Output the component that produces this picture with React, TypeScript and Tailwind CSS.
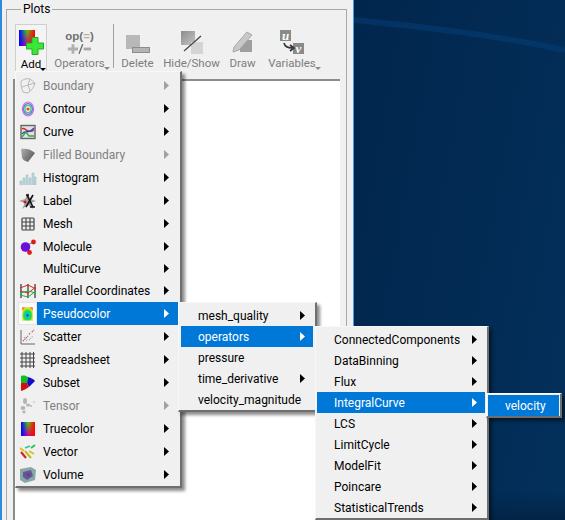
import type { ReactNode } from 'react';

const FONT = "font-['Roboto','Noto_Sans',sans-serif]";

type MenuRow = {
  label: string;
  icon?: ReactNode;
  disabled?: boolean;
  active?: boolean;
  noArrow?: boolean;
  height?: string;
};

const Icon = ({ children }: { children: ReactNode }) => (
  <svg width="18" height="18" viewBox="0 0 18 18" className="block">
    {children}
  </svg>
);

const BoundaryIcon = () => (
  <Icon>
    <path d="M2 4 C5 2 9 1 11 2 L16 6 C15 10 13 13 9 16 L4 15 C2 11 2 7 2 4 Z M11 2 L9 8 L16 6 M9 8 L3 10 M9 8 L11 14" fill="none" stroke="#b8b8b8" strokeWidth="1" />
  </Icon>
);
const ContourIcon = () => (
  <Icon>
    <ellipse cx="9" cy="9" rx="5.6" ry="7" fill="none" stroke="#d070e8" strokeWidth="1.2" />
    <ellipse cx="9" cy="9" rx="4.4" ry="5.4" fill="none" stroke="#4a6ee8" strokeWidth="1.2" />
    <ellipse cx="9" cy="9" rx="3" ry="3.6" fill="none" stroke="#46c860" strokeWidth="1.2" />
    <circle cx="9" cy="9" r="1.6" fill="#d84848" />
  </Icon>
);
const CurveIcon = () => (
  <Icon>
    <rect x="2" y="2.5" width="14" height="13" fill="#e0e0e4" stroke="#666" strokeWidth="1.4" />
    <path d="M3 6 C6 3 8 12 15 7" fill="none" stroke="#d82828" strokeWidth="1.3" />
    <path d="M3 11 C6 6 9 12 15 5" fill="none" stroke="#2848c8" strokeWidth="1.3" />
    <path d="M3 14 L7 9 L10 13 L15 13" fill="none" stroke="#28b040" strokeWidth="1.3" />
  </Icon>
);
const FilledIcon = () => (
  <Icon>
    <defs>
      <linearGradient id="fb" x1="0" y1="0" x2="1" y2="0.6">
        <stop offset="0%" stopColor="#b0b0b0" />
        <stop offset="100%" stopColor="#5c5c5c" />
      </linearGradient>
    </defs>
    <path d="M2 3 C7 2 12 3 16 7 L9 16 C5 15 3 13 3 11 Z" fill="url(#fb)" />
  </Icon>
);
const HistogramIcon = () => (
  <Icon>
    <path d="M1 16 V12 H3 V16 M4 16 V9 H6 V16 M7 16 V6 H9 V16 M10 16 V9 H12 V16 M13 16 V4 H15 V16 M15.5 16 V8 H17 V16" fill="#bcd8dc" stroke="#a0c0c4" strokeWidth="0.6" />
  </Icon>
);
const LabelIcon = () => (
  <Icon>
    <path d="M0 9 L6 7 L9 1 L11 7 L17 9 L12 11 L14 17 L9 13 L3 17 L6 11 Z" fill="#a0a0a0" />
    <path d="M8 3 L14 15 M14 3 L7 15 M7 3 H10 M11 15 H16" stroke="#111" strokeWidth="1.6" fill="none" />
    <circle cx="6" cy="10" r="1.5" fill="#d81818" />
  </Icon>
);
const MeshIcon = () => (
  <Icon>
    <rect x="3" y="3" width="12" height="12" rx="1" fill="#ebebeb" stroke="#444" strokeWidth="1.2" />
    <path d="M3 7 H15 M3 11 H15 M7 3 V15 M11 3 V15" stroke="#444" strokeWidth="1.1" />
  </Icon>
);
const MoleculeIcon = () => (
  <Icon>
    <path d="M7 8 L14 4 M7 9 L11 15" stroke="#777" strokeWidth="1" />
    <circle cx="6.5" cy="9" r="4.8" fill="#6a10d8" />
    <circle cx="14.5" cy="4" r="2.4" fill="#e01818" />
    <circle cx="10.5" cy="14.5" r="2.4" fill="#e01818" />
  </Icon>
);
const ParallelIcon = () => (
  <Icon>
    <path d="M2 2 V16 M9 2 V16 M16 2 V16" stroke="#222" strokeWidth="1.1" />
    <path d="M1 6 L9 3 L17 7 M1 9 L9 11 L17 5" fill="none" stroke="#e02020" strokeWidth="1" />
    <path d="M1 11 L9 9 L17 11 M1 13 L9 15 L17 9" fill="none" stroke="#20b040" strokeWidth="1" />
  </Icon>
);
const PseudocolorIcon = () => (
  <Icon>
    <defs>
      <radialGradient id="pc" cx="50%" cy="60%" r="70%">
        <stop offset="0%" stopColor="#0018e0" />
        <stop offset="22%" stopColor="#00c8e0" />
        <stop offset="50%" stopColor="#20e030" />
        <stop offset="80%" stopColor="#e8e820" />
        <stop offset="100%" stopColor="#f04020" />
      </radialGradient>
    </defs>
    <rect x="3.5" y="2" width="11" height="14" fill="url(#pc)" />
  </Icon>
);
const ScatterIcon = () => (
  <Icon>
    <path d="M2 2 V16 H16" fill="none" stroke="#666" strokeWidth="1" />
    <path d="M4 13 L6 11 M7 10 L9 8 M10 6 L12 5 M13 4 L15 2" stroke="#c04848" strokeWidth="1.5" strokeDasharray="1 1" />
    <path d="M5 9 L8 13 M10 12 L14 8" stroke="#a8a8a8" strokeWidth="1.2" strokeDasharray="1 1" />
  </Icon>
);
const SpreadsheetIcon = () => (
  <Icon>
    <path d="M1 3 H16 M1 7 H16 M1 11 H16 M1 15 H16 M3 1 V17 M7 1 V17 M11 1 V17 M14.5 1 V17" stroke="#444" strokeWidth="1" />
  </Icon>
);
const SubsetIcon = () => (
  <Icon>
    <path d="M2 2 C5 1 7 2 9 3 L8 9 L2 9 Z" fill="#10c020" />
    <path d="M9 3 C12 4 15 5 16 7 L10 13 L8 9 Z" fill="#1010c8" />
    <path d="M2 9 L8 9 L10 13 C7 15 5 16 2 17 Z" fill="#d01010" />
  </Icon>
);
const TensorIcon = () => (
  <Icon>
    <g fill="#b4b4b4">
      <ellipse cx="6" cy="4" rx="2" ry="3" />
      <ellipse cx="4" cy="11" rx="2.4" ry="2" />
      <ellipse cx="9" cy="8" rx="2" ry="1.6" />
      <ellipse cx="5" cy="15" rx="1.6" ry="1.4" />
      <circle cx="12" cy="9" r="1" />
      <circle cx="15" cy="5" r="0.8" />
    </g>
  </Icon>
);
const TruecolorIcon = () => (
  <div className="h-[14px] w-[14px] bg-[linear-gradient(90deg,#0000ff,rgba(0,0,255,0)_55%),linear-gradient(270deg,#ff0000,rgba(255,0,0,0)_60%),linear-gradient(0deg,#d000a0,#40f000)]" />
);
const VectorIcon = () => (
  <Icon>
    <path d="M1 5 L5 8" stroke="#e0c020" strokeWidth="1.8" />
    <path d="M6 5 L11 3" stroke="#30c8a0" strokeWidth="1.8" />
    <path d="M12 5 L16 2" stroke="#30c050" strokeWidth="1.8" />
    <path d="M2 9 L7 15" stroke="#d02018" strokeWidth="2" />
    <path d="M6 8 L12 15" stroke="#c8b820" strokeWidth="2" />
    <path d="M10 8 L15 11" stroke="#d0c020" strokeWidth="1.6" />
  </Icon>
);
const VolumeIcon = () => (
  <Icon>
    <path d="M1 3 L12 1 L17 4 L16 14 L6 17 L1 14 Z" fill="#88a8a8" />
    <path d="M4 6 L12 4 L14 10 L8 14 L4 11 Z" fill="#5e5a98" />
    <path d="M7 8 L11 7 L10 11 Z" fill="#8a2a8a" />
  </Icon>
);

const plotRows: MenuRow[] = [
  { label: 'Boundary', icon: <BoundaryIcon />, disabled: true },
  { label: 'Contour', icon: <ContourIcon /> },
  { label: 'Curve', icon: <CurveIcon /> },
  { label: 'Filled Boundary', icon: <FilledIcon />, disabled: true },
  { label: 'Histogram', icon: <HistogramIcon /> },
  { label: 'Label', icon: <LabelIcon /> },
  { label: 'Mesh', icon: <MeshIcon /> },
  { label: 'Molecule', icon: <MoleculeIcon /> },
  { label: 'MultiCurve', height: 'h-[21px]' },
  { label: 'Parallel Coordinates', icon: <ParallelIcon /> },
  { label: 'Pseudocolor', icon: <PseudocolorIcon />, active: true },
  { label: 'Scatter', icon: <ScatterIcon /> },
  { label: 'Spreadsheet', icon: <SpreadsheetIcon /> },
  { label: 'Subset', icon: <SubsetIcon /> },
  { label: 'Tensor', icon: <TensorIcon />, disabled: true },
  { label: 'Truecolor', icon: <TruecolorIcon /> },
  { label: 'Vector', icon: <VectorIcon /> },
  { label: 'Volume', icon: <VolumeIcon /> },
];

const varRows: MenuRow[] = [
  { label: 'mesh_quality' },
  { label: 'operators', active: true },
  { label: 'pressure', noArrow: true },
  { label: 'time_derivative' },
  { label: 'velocity_magnitude', noArrow: true },
];

const operatorRows: MenuRow[] = [
  { label: 'ConnectedComponents' },
  { label: 'DataBinning' },
  { label: 'Flux' },
  { label: 'IntegralCurve', active: true },
  { label: 'LCS' },
  { label: 'LimitCycle' },
  { label: 'ModelFit' },
  { label: 'Poincare' },
  { label: 'StatisticalTrends' },
];

const Chevron = ({ color }: { color: string }) => (
  <svg width="5" height="9" viewBox="0 0 5 9" className="block">
    <path d="M0 0 L5 4.5 L0 9 Z" fill={color} />
  </svg>
);

const PlotRow = ({ row }: { row: MenuRow }) => {
  const textColor = row.disabled ? 'text-[#808080]' : row.active ? 'text-white' : 'text-black';
  return (
    <div className={`flex items-center ${row.height ?? 'h-[23px]'}`}>
      <div
        className={`flex h-full w-[19px] shrink-0 items-center justify-center ${row.active ? 'border border-[#e3e3e3] bg-[#fafafa]' : ''}`}
      >
        {row.icon}
      </div>
      <div className={`flex h-full flex-1 items-center pl-[6px] pr-[9px] ${textColor} ${row.active ? 'bg-[#0078d7]' : ''}`}>
        <span className="flex-1 whitespace-nowrap">{row.label}</span>
        <Chevron color={row.disabled ? '#a0a0a0' : row.active ? '#ffffff' : '#000000'} />
      </div>
    </div>
  );
};

const TextRow = ({ row }: { row: MenuRow }) => (
  <div className={`flex h-[21px] items-center pl-[17px] pr-[8px] ${row.active ? 'bg-[#0078d7] text-white' : 'text-black'}`}>
    <span className="flex-1 whitespace-nowrap">{row.label}</span>
    {!row.noArrow && <Chevron color={row.active ? '#ffffff' : '#000000'} />}
  </div>
);

// Qt's windows-style popup: light top and left, dark right and bottom, soft drop
const popup =
  'absolute border-t border-l border-t-[#f8f8f8] border-l-[#f8f8f8] border-r-2 border-b-2 border-r-[#6e6e6e] border-b-[#6e6e6e] bg-[#f0f0f0] shadow-[3px_3px_3px_rgba(0,0,0,0.45)]';

const ToolButton = ({
  label,
  icon,
  width,
  caret,
  raised,
  dim = true,
}: {
  label: string;
  icon: ReactNode;
  width: string;
  caret?: boolean;
  raised?: boolean;
  dim?: boolean;
}) => (
  <div
    className={`flex h-[48px] flex-col items-center ${width} ${raised ? 'border-x border-t border-x-[#cfcfcf] border-t-[#cfcfcf] bg-[#f4f4f4]' : ''}`}
  >
    <div className="flex h-[30px] items-end justify-center">{icon}</div>
    <div className={`relative mt-[1px] whitespace-nowrap text-[11.5px] leading-[16px] ${dim ? 'text-[#7d7d7d]' : 'text-black'}`}>
      {label}
      {caret && (
        <span
          className={`absolute -right-[5px] bottom-[1px] h-0 w-0 border-x-[3px] border-t-[3px] border-x-transparent ${dim ? 'border-t-[#8a8a8a]' : 'border-t-black'}`}
        />
      )}
    </div>
  </div>
);

const AddIcon = () => (
  <div className="relative h-[25px] w-[25px]">
    <div className="absolute left-0 top-0 h-[16px] w-[16px] bg-[linear-gradient(90deg,#0000ff,rgba(0,0,255,0)_55%),linear-gradient(270deg,#ff0000,rgba(255,0,0,0)_60%),linear-gradient(0deg,#d000a0,#40f000)]" />
    <svg width="18" height="18" viewBox="0 0 18 18" className="absolute bottom-0 right-0 block">
      <path
        d="M6 0.5 H12 V6 H17.5 V12 H12 V17.5 H6 V12 H0.5 V6 H6 Z"
        fill="#38e838"
        stroke="#26a826"
        strokeWidth="1"
      />
    </svg>
  </div>
);

const OperatorsIcon = () => (
  <div className="flex flex-col items-center">
    <span className="font-['Liberation_Sans',sans-serif] text-[11.5px] font-bold leading-[12px] text-[#707070]">
      op(<span className="text-[#b0b0b0]">=</span>)
    </span>
    <svg width="26" height="10" viewBox="0 0 28 10" className="mt-[2px] block">
      <path d="M6 0 H9 V3.5 H13 V6.5 H9 V10 H6 V6.5 H2 V3.5 H6 Z" fill="#b0b0b0" />
      <path d="M14 10 L18 0" stroke="#666" strokeWidth="1.4" />
      <rect x="19" y="3.5" width="8" height="3" fill="#a8a8a8" />
    </svg>
  </div>
);

const DeleteIcon = () => (
  <svg width="26" height="20" viewBox="0 0 26 20" className="block">
    <rect x="1" y="1" width="14" height="14" fill="#b8b8b8" />
    <rect x="7.5" y="13.5" width="17" height="5" fill="#b4b4b4" stroke="#8c8c8c" />
  </svg>
);

const HideShowIcon = () => (
  <svg width="24" height="24" viewBox="0 0 24 24" className="block">
    <defs>
      <linearGradient id="hs" x1="0" y1="0" x2="1" y2="1">
        <stop offset="0%" stopColor="#8c8c8c" />
        <stop offset="100%" stopColor="#c4c4c4" />
      </linearGradient>
    </defs>
    <rect x="1" y="1" width="14" height="14" fill="url(#hs)" />
    <rect x="11" y="12" width="12" height="12" fill="#d4d4d4" />
    <path d="M4 21 L21 6" stroke="#444" strokeWidth="1.2" />
  </svg>
);

const DrawIcon = () => (
  <svg width="24" height="24" viewBox="0 0 24 24" className="block">
    <rect x="9" y="10" width="12" height="12" fill="#9e9e9e" />
    <path d="M2 22 L3 17 L16 2 L21 5 L8 20 Z" fill="#c8c8c8" stroke="#a8a8a8" />
  </svg>
);

const VariablesIcon = () => (
  <div className="relative h-[24px] w-[24px] font-['Liberation_Serif',serif] text-[13px] font-bold italic leading-[11px] text-white">
    <span className="absolute left-0 top-0 h-[11px] w-[11px] bg-[#8a8a8a] text-center">u</span>
    <span className="absolute bottom-0 right-0 h-[11px] w-[11px] bg-[#8a8a8a] text-center">v</span>
    <svg width="12" height="10" viewBox="0 0 12 10" className="absolute bottom-[2px] left-[3px]">
      <path d="M1 1 C2 5 5 6 9 6 M7 3 L11 6 L7 9" fill="none" stroke="#333" strokeWidth="1.6" />
    </svg>
  </div>
);

const App = () => {
  return (
    <div className={`relative flex h-[520px] w-[565px] overflow-hidden text-[12px] ${FONT}`}>
      <div className="h-full w-[354px] shrink-0 border-l-2 border-r border-l-[#2a8be0] border-r-[#4a9be0] bg-[#f0f0f0] pl-[4px]">
        <fieldset className="h-[540px] w-[341px] border border-[#a8a8a8] pl-[8px]">
          <legend className="ml-[6px] px-[2px] leading-[18px] text-black">Plots</legend>
          <div className="mt-[6px] flex items-start">
            <ToolButton
              label="Add"
              icon={<AddIcon />}
              width="w-[32px]"
              caret
              raised
              dim={false}
            />
            <div className="ml-[5px]">
              <ToolButton label="Operators" icon={<OperatorsIcon />} width="w-[55px]" caret />
            </div>
            <div className="ml-[6px] h-[44px] w-px bg-[#a0a0a0]" />
            <div className="ml-[7px]">
              <ToolButton label="Delete" icon={<DeleteIcon />} width="w-[33px]" />
            </div>
            <div className="ml-[11px]">
              <ToolButton label="Hide/Show" icon={<HideShowIcon />} width="w-[53px]" />
            </div>
            <div className="ml-[11px]">
              <ToolButton label="Draw" icon={<DrawIcon />} width="w-[27px]" />
            </div>
            <div className="ml-[11px]">
              <ToolButton label="Variables" icon={<VariablesIcon />} width="w-[50px]" caret />
            </div>
          </div>
          <div className="ml-[-2px] mt-[7px] h-[500px] w-[327px] border-l-2 border-t-2 border-l-[#8c8c8c] border-t-[#8c8c8c] bg-white" />
        </fieldset>
      </div>

      <div className="relative flex-1 overflow-hidden bg-[linear-gradient(100deg,#01264d_0%,#022a52_45%,#03305c_100%)]">
        <div className="absolute inset-x-0 bottom-0 h-[30px] bg-gradient-to-b from-transparent to-[#022546]" />
        <svg width="211" height="60" viewBox="0 0 211 60" className="absolute left-0 top-0">
          <path d="M0 20 C60 26 130 33 211 50" fill="none" stroke="#04407a" strokeWidth="6" opacity="0.5" />
        </svg>
      </div>

      <div className={`${popup} left-[15px] top-[71px] w-[167px] pl-[2px] pr-[2px] pt-[2px]`}>
        {plotRows.map((row) => (
          <PlotRow key={row.label} row={row} />
        ))}
      </div>

      <div className={`${popup} left-[178px] top-[302px] w-[139px] px-[2px] pt-[2px]`}>
        {varRows.map((row) => (
          <TextRow key={row.label} row={row} />
        ))}
      </div>

      <div className={`${popup} left-[315px] top-[326px] w-[174px] pl-[1px] pr-[2px] pt-[2px]`}>
        {operatorRows.map((row) => (
          <TextRow key={row.label} row={row} />
        ))}
      </div>

      <div className={`${popup} left-[486px] top-[393px] w-[76px] border-t-white border-l-white px-[1px] pt-[1px]`}>
        <TextRow row={{ label: 'velocity', active: true, noArrow: true }} />
      </div>
    </div>
  );
};

export default App;
